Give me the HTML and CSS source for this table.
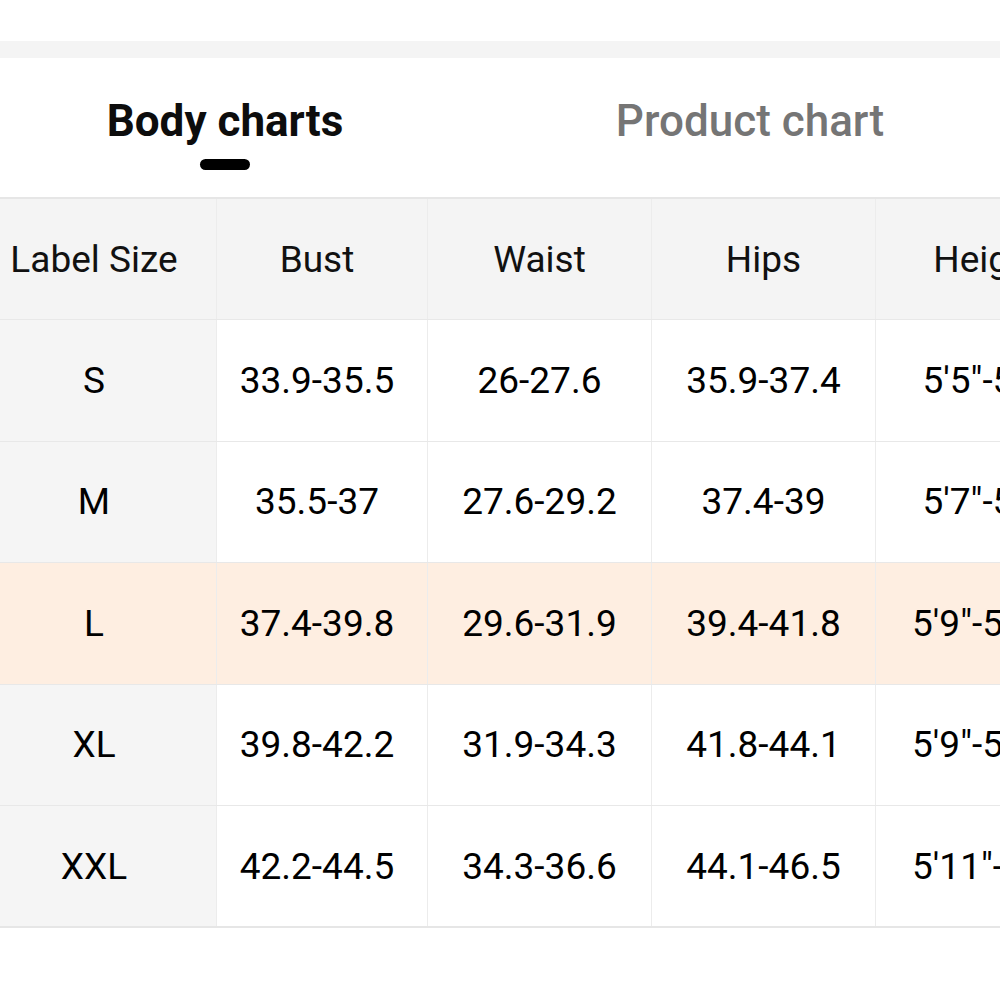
FILE: index.html
```html
<!DOCTYPE html>
<html>
<head>
<meta charset="utf-8">
<link rel="stylesheet" href="styles.css">
</head>
<body>
<div class="page">
  <div class="top"></div>
  <div class="band"></div>
  <div class="tabs">
    <div class="tab active">Body charts<span class="bar"></span></div>
    <div class="tab">Product chart</div>
  </div>
  <div class="table">
    <div class="row head">
      <div class="cell first">Label Size</div>
      <div class="cell second">Bust</div>
      <div class="cell">Waist</div>
      <div class="cell">Hips</div>
      <div class="cell">Height</div>
    </div>
    <div class="row">
      <div class="cell first">S</div>
      <div class="cell second">33.9-35.5</div>
      <div class="cell">26-27.6</div>
      <div class="cell">35.9-37.4</div>
      <div class="cell">5'5"-5'7"</div>
    </div>
    <div class="row">
      <div class="cell first">M</div>
      <div class="cell second">35.5-37</div>
      <div class="cell">27.6-29.2</div>
      <div class="cell">37.4-39</div>
      <div class="cell">5'7"-5'9"</div>
    </div>
    <div class="row hl">
      <div class="cell first">L</div>
      <div class="cell second">37.4-39.8</div>
      <div class="cell">29.6-31.9</div>
      <div class="cell">39.4-41.8</div>
      <div class="cell">5'9"-5'11"</div>
    </div>
    <div class="row">
      <div class="cell first">XL</div>
      <div class="cell second">39.8-42.2</div>
      <div class="cell">31.9-34.3</div>
      <div class="cell">41.8-44.1</div>
      <div class="cell">5'9"-5'11"</div>
    </div>
    <div class="row">
      <div class="cell first">XXL</div>
      <div class="cell second">42.2-44.5</div>
      <div class="cell">34.3-36.6</div>
      <div class="cell">44.1-46.5</div>
      <div class="cell">5'11"-6'1"</div>
    </div>
  </div>
</div>
</body>
</html>
```
FILE: styles.css
```css
html, body {
  margin: 0;
  padding: 0;
  background: #fff;
  overflow: hidden;
}
.page {
  width: 1000px;
  height: 1000px;
  overflow: hidden;
  font-family: Roboto, "Liberation Sans", sans-serif;
  color: #111;
}
.top {
  height: 41px;
  background: #fff;
}
.band {
  height: 17px;
  background: #f4f4f4;
}
.tabs {
  height: 139px;
  display: grid;
  grid-template-columns: 450px 600px;
  align-items: start;
}
.tab {
  position: relative;
  text-align: center;
  font-size: 44px;
  font-weight: 500;
  color: #757575;
  line-height: 52px;
  margin-top: 37px;
}
.tab.active {
  color: #0d0d0d;
  font-weight: 700;
}
.bar {
  position: absolute;
  left: 200px;
  top: 64px;
  width: 50px;
  height: 11px;
  border-radius: 6px;
  background: #000;
}
.table {
  width: 1200px;
  border-top: 2px solid #e6e6e6;
  border-bottom: 2px solid #e6e6e6;
}
.row {
  display: grid;
  grid-template-columns: 216px 211px 224px 224px 224px 100px;
  height: 120.4px;
  border-top: 1px solid #e8e8e8;
}
.row:first-child {
  border-top: none;
}
.cell {
  display: flex;
  align-items: center;
  justify-content: center;
  font-size: 37px;
  font-weight: 400;
  color: #000;
  border-left: 1px solid #ececec;
  white-space: nowrap;
}
.cell.first {
  border-left: none;
  background: #f5f5f5;
  padding-right: 28px;
}
.cell.second {
  padding-right: 10px;
}
.head .cell {
  background: #f4f4f4;
  color: #111;
}
.hl .cell, .hl .cell.first {
  background: #feeee1;
}
```
